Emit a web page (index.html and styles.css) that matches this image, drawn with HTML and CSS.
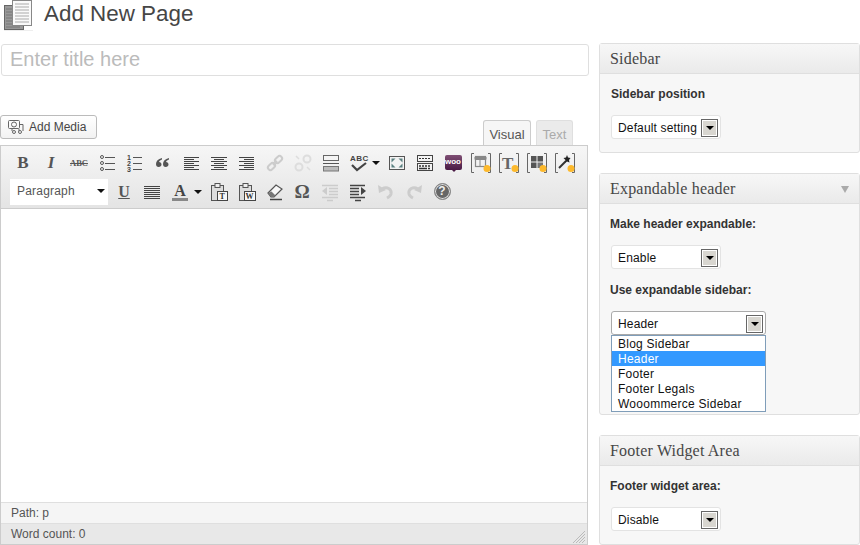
FILE: index.html
```html
<!DOCTYPE html>
<html lang="en">
<head>
<meta charset="utf-8">
<title>Add New Page</title>
<link rel="stylesheet" href="styles.css">
</head>
<body>
<div class="page">
  <main class="main-col">
    <header class="page-head">
      <svg class="page-icon" width="33" height="32" viewBox="0 0 33 32">
        <rect x="4.500" y="5.500" width="19" height="24" fill="#999" stroke="#666"/>
        <path d="M6 9h6M6 12h6M6 15h6M6 18h6M6 21h6M6 24h9M6 27h14" stroke="#777"/>
        <rect x="12.500" y="0.500" width="19" height="25" fill="#fafafa" stroke="#888"/>
        <path d="M15 4h14M15 7h14M15 10h14M15 13h14M15 16h14M15 19h14M15 22h14" stroke="#aaa"/>
        <rect x="4" y="30" width="29" height="1" fill="#eee"/>
      </svg>
      <h1 class="page-title">Add New Page</h1>
    </header>
    <div class="title-input">Enter title here</div>
    <div class="media-row">
      <button class="media-btn">
        <svg width="16" height="16" viewBox="0 0 16 16" fill="none" stroke="#666">
          <rect x="0.500" y="1.500" width="11" height="8" rx="1"/>
          <circle cx="6" cy="5.500" r="2.500"/>
          <path d="M12 5.500h3V12M4 10v2M11 10v2"/>
          <circle cx="6" cy="13" r="1.500"/><circle cx="12" cy="13" r="1.500"/>
        </svg>
        Add Media
      </button>
      <div class="tabs">
        <div class="tab active">Visual</div>
        <div class="tab">Text</div>
      </div>
    </div>
    <section class="editor">
      <div class="toolbar">
        <div class="tb-row">
          <span class="btn"><span class="g-b">B</span></span>
          <span class="btn"><span class="g-i">I</span></span>
          <span class="btn"><span class="g-s">ABC</span></span>
          <span class="btn"><svg width="20" height="20" viewBox="0 0 20 20" fill="none" stroke="#555"><circle cx="5" cy="4" r="1.500"/><circle cx="5" cy="10" r="1.500"/><circle cx="5" cy="16" r="1.500"/><path d="M8 4.500h10M8 10.500h10M8 16.500h10"/></svg></span>
          <span class="btn"><svg width="20" height="20" viewBox="0 0 20 20"><text x="2" y="7" class="num">1</text><text x="2" y="13" class="num">2</text><text x="2" y="19" class="num">3</text><path d="M8 4.500h9M8 10.500h9M8 16.500h9" stroke="#555"/></svg></span>
          <span class="btn"><svg width="20" height="20" viewBox="0 0 20 20" fill="#555"><path d="M9 5C5 6 3 8 3 11c0 2 1 3 2.700 3S8.500 13 8.500 11.500 7.500 9 6 9c.5-1.500 1.500-2 3-2.500zM16 5c-4 1-6 3-6 6 0 2 1 3 2.700 3s2.800-1 2.800-2.500S14.500 9 13 9c.5-1.500 1.500-2 3-2.500z"/></svg></span>
          <span class="btn"><svg width="20" height="20" viewBox="0 0 20 20" stroke="#444"><path d="M3 4.500h15M3 6.500h10M3 8.500h15M3 10.500h10M3 12.500h15M3 14.500h10M3 16.500h15"/></svg></span>
          <span class="btn"><svg width="20" height="20" viewBox="0 0 20 20" stroke="#444"><path d="M2 4.500h16M5 6.500h10M2 8.500h16M5 10.500h10M2 12.500h16M5 14.500h10M2 16.500h16"/></svg></span>
          <span class="btn"><svg width="20" height="20" viewBox="0 0 20 20" stroke="#444"><path d="M2 4.500h15M7 6.500h10M2 8.500h15M7 10.500h10M2 12.500h15M7 14.500h10M2 16.500h15"/></svg></span>
          <span class="btn"><svg width="20" height="20" viewBox="0 0 20 20" fill="none" stroke="#ccc" stroke-width="2"><rect x="2.500" y="11" width="8" height="5" rx="2.500" transform="rotate(-45 6.500 13.500)"/><rect x="9.500" y="4" width="8" height="5" rx="2.500" transform="rotate(-45 13.500 6.500)"/><path d="M8 12l4-4"/></svg></span>
          <span class="btn"><svg width="20" height="20" viewBox="0 0 20 20" fill="none" stroke="#ddd" stroke-width="2"><circle cx="14" cy="6" r="3.500"/><circle cx="6" cy="14" r="3.500"/><path d="M3 3l3 3M17 17l-3-3" stroke-width="1.500"/></svg></span>
          <span class="btn"><svg width="20" height="20" viewBox="0 0 20 20"><rect x="2.500" y="2.500" width="15" height="5" fill="#f4f4f4" stroke="#666"/><path d="M2 10.500h16" stroke="#555"/><rect x="2.500" y="13.500" width="15" height="4.500" fill="#bbb" stroke="#777"/></svg></span>
          <span class="btn btn-spell"><svg width="20" height="20" viewBox="0 0 20 20"><text x="1" y="8" class="abc">ABC</text><path d="M3 12l5 5 9-7" fill="none" stroke="#444" stroke-width="2.200"/></svg></span><span class="drop"></span>
          <span class="btn btn-after"><svg width="20" height="20" viewBox="0 0 20 20" fill="none"><rect x="2.500" y="3.500" width="15" height="13" stroke="#555" fill="#f3f3f3"/><path d="M4.500 5.500h4l-4 4zM15.500 5.500h-4l4 4zM4.500 14.500h4l-4-4zM15.500 14.500h-4l4-4z" fill="#5a8080"/></svg></span>
          <span class="btn"><svg width="20" height="20" viewBox="0 0 20 20"><rect x="2.500" y="2.500" width="15" height="6" fill="#f4f4f4" stroke="#444"/><path d="M4 5.500h2M7 5.500h2M10 5.500h2M13 5.500h2" stroke="#333"/><rect x="2.500" y="10.500" width="15" height="7" fill="#f4f4f4" stroke="#444"/><path d="M4 13h2M7 13h2M10 13h2M13 13h2M4 15.500h8M13 15.500h2" stroke="#333" stroke-width="1.500"/></svg></span>
          <span class="btn"><span class="woo">woo</span></span>
          <span class="btn"><svg width="22" height="22" viewBox="0 0 22 22" fill="none"><path d="M4 1.500H1.500v19H4M18 1.500h2.500v19H18" stroke="#666"/><rect x="5.500" y="4.500" width="10" height="10" stroke="#888" stroke-width="1.200"/><path d="M5 5h11v2.500H5zM10 7v8" stroke="#888" fill="#888"/><circle cx="17" cy="16.500" r="3.500" fill="#fdb92c"/></svg></span>
          <span class="btn"><svg width="22" height="22" viewBox="0 0 22 22" fill="none"><path d="M4 1.500H1.500v19H4M18 1.500h2.500v19H18" stroke="#666"/><text x="4" y="17" class="big-t">T</text><circle cx="17" cy="16.500" r="3.500" fill="#fdb92c"/></svg></span>
          <span class="btn"><svg width="22" height="22" viewBox="0 0 22 22" fill="none"><path d="M4 1.500H1.500v19H4M18 1.500h2.500v19H18" stroke="#666"/><path d="M5 4h5.500v5.500H5zM11.500 4H17v5.500h-5.500zM5 10.500h5.500V16H5z" fill="#555"/><path d="M11.500 10.500H17V16h-5.500z" fill="#777"/><circle cx="17" cy="16.500" r="3.500" fill="#fdb92c"/></svg></span>
          <span class="btn"><svg width="22" height="22" viewBox="0 0 22 22" fill="none"><path d="M4 1.500H1.500v19H4M18 1.500h2.500v19H18" stroke="#666"/><path d="M5 16l7-7" stroke="#333" stroke-width="2"/><path d="M13 3l1 2.500 2.500 0.500-1.500 2 .5 2.500-2.500-1-2 1 .5-2.500-2-2 2.500-.5z" fill="#222"/><circle cx="17" cy="16.500" r="3.500" fill="#fdb92c"/></svg></span>
        </div>
        <div class="tb-row tb-row2">
          <div class="format-select"><span>Paragraph</span><span class="drop drop-fmt"></span></div>
          <span class="btn"><span class="g-u">U</span></span>
          <span class="btn"><svg width="20" height="20" viewBox="0 0 20 20" stroke="#444"><path d="M2 4.500h16M2 6.500h16M2 8.500h16M2 10.500h16M2 12.500h16M2 14.500h16M2 16.500h16"/></svg></span>
          <span class="btn btn-color"><span class="g-a">A</span></span><span class="drop drop-color"></span>
          <span class="btn btn-paste"><svg width="20" height="20" viewBox="0 0 20 20"><rect x="2.500" y="3.500" width="12" height="15" fill="#ddd" stroke="#555"/><rect x="6" y="1.500" width="5" height="4" fill="#eee" stroke="#555"/><rect x="8.500" y="9.500" width="10" height="9" fill="#f7f7f7" stroke="#444"/><text x="10.500" y="17" class="pt">T</text></svg></span>
          <span class="btn"><svg width="20" height="20" viewBox="0 0 20 20"><rect x="2.500" y="3.500" width="12" height="15" fill="#ddd" stroke="#555"/><rect x="6" y="1.500" width="5" height="4" fill="#eee" stroke="#555"/><rect x="7.500" y="9.500" width="11" height="9" fill="#f7f7f7" stroke="#444"/><text x="8.500" y="17" class="pt">W</text></svg></span>
          <span class="btn"><svg width="20" height="20" viewBox="0 0 20 20"><path d="M3 11l8-8 6 4-8 8H6z" fill="#f8f8f8" stroke="#555" stroke-width="1.200"/><path d="M3 11l3 4h3l1.500-1.500-4-4z" fill="#777"/><path d="M5 17.500h12" stroke="#444" stroke-width="1.500"/></svg></span>
          <span class="btn btn-omega"><span class="g-o">Ω</span></span>
          <span class="btn"><svg width="20" height="20" viewBox="0 0 20 20" stroke="#ccc"><path d="M2 3.500h16M9 6.500h9M9 9.500h9M9 12.500h9M2 15.500h16M7 18.500h6" stroke-width="1.500"/><path d="M7 5v8l-5-4z" fill="#ccc" stroke="none"/></svg></span>
          <span class="btn"><svg width="20" height="20" viewBox="0 0 20 20" stroke="#444"><path d="M2 3.500h15M2 6.500h9M2 9.500h9M2 12.500h9M2 15.500h15M7 18.500h6" stroke-width="1.500"/><path d="M13 5v8l5-4z" fill="#444" stroke="none"/></svg></span>
          <span class="btn"><svg width="20" height="20" viewBox="0 0 20 20" fill="none" stroke="#ccc" stroke-width="3"><path d="M6 7c5-3 10 0 9 5-.5 2-2 3-4 4"/><path d="M2 3l1 8 7-3z" fill="#ccc" stroke="none"/></svg></span>
          <span class="btn"><svg width="20" height="20" viewBox="0 0 20 20" fill="none" stroke="#ccc" stroke-width="3"><path d="M14 7C9 4 4 7 5 12c.5 2 2 3 4 4"/><path d="M18 3l-1 8-7-3z" fill="#ccc" stroke="none"/></svg></span>
          <span class="btn"><span class="help">?</span></span>
        </div>
      </div>
      <div class="content"></div>
      <div class="path">Path: p</div>
      <div class="wordcount">
        <span>Word count: 0</span>
        <svg class="resize" width="14" height="14" viewBox="0 0 14 14" stroke="#bbb"><path d="M13 1L1 13M13 4L4 13M13 7L7 13M13 10L10 13"/></svg>
      </div>
    </section>
  </main>
  <aside class="side-col">
    <section class="box">
      <h2 class="box-title">Sidebar</h2>
      <div class="box-body">
        <p class="label label-first">Sidebar position</p>
        <div class="select"><span>Default setting</span><span class="arrow"></span></div>
      </div>
    </section>
    <section class="box box-tall">
      <h2 class="box-title">Expandable header<span class="collapse"></span></h2>
      <div class="box-body">
        <p class="label">Make header expandable:</p>
        <div class="select"><span>Enable</span><span class="arrow"></span></div>
        <p class="label label-second">Use expandable sidebar:</p>
        <div class="select select-open"><span>Header</span><span class="arrow"></span></div>
        <ul class="options">
          <li>Blog Sidebar</li>
          <li class="sel">Header</li>
          <li>Footer</li>
          <li>Footer Legals</li>
          <li>Wooommerce Sidebar</li>
        </ul>
      </div>
    </section>
    <section class="box">
      <h2 class="box-title">Footer Widget Area</h2>
      <div class="box-body">
        <p class="label">Footer widget area:</p>
        <div class="select"><span>Disable</span><span class="arrow"></span></div>
      </div>
    </section>
  </aside>
</div>
</body>
</html>
```
FILE: styles.css
```css
* { box-sizing: border-box; }
html, body { margin: 0; height: 545px; overflow: hidden; background: #fff; }
body { font: 12px "Liberation Sans", Arial, sans-serif; color: #333; }
.page { display: flex; gap: 10px; }
.main-col { width: 589px; flex: none; }
.side-col { width: 261px; flex: none; padding-top: 43px; display: flex; flex-direction: column; gap: 20px; }

.page-head { display: flex; align-items: flex-start; height: 44px; }
.page-icon { flex: none; }
.page-title { margin: 0 0 0 11px; font: 400 22.4px/27px "Liberation Sans", sans-serif; color: #464646; }

.title-input { margin-left: 1px; height: 32px; border: 1px solid #dfdfdf; border-radius: 3px; padding-left: 8px; font-size: 20px; line-height: 29px; color: #bbb; background: #fff; }

.media-row { display: flex; justify-content: space-between; align-items: flex-end; height: 69px; }
.media-btn { margin: 0 0 6px; width: 97px; height: 24px; display: flex; align-items: center; gap: 5px; padding: 0 0 0 7px; border: 1px solid #bbb; border-radius: 3px; background: linear-gradient(#fff, #f2f2f2); font: 12px "Liberation Sans", sans-serif; color: #464646; }
.tabs { display: flex; gap: 5px; margin-right: 16px; position: relative; top: 1px; }
.tab { width: 37px; height: 25px; text-align: center; border: 1px solid #dfdfdf; border-bottom: 0; border-radius: 3px 3px 0 0; background: #ebebeb; color: #aaa; font-size: 13px; line-height: 27px; }
.tab.active { width: 48px; background: #f6f6f6; color: #555; border-color: #ccc; height: 26px; }

.editor { position: relative; height: 400px; width: 588px; border: 1px solid #ccc; border-top-color: #ccc; display: flex; flex-direction: column; }
.toolbar { height: 63px; padding: 2px 0 0 8px; background: linear-gradient(#f6f6f6, #e4e4e4); border-bottom: 1px solid #ccc; }
.tb-row { display: flex; align-items: center; height: 29px; }
.tb-row2 { padding-left: 1px; }
.btn { width: 28px; height: 26px; flex: none; display: flex; align-items: center; justify-content: center; }
.btn-spell { margin-right: -1px; }
.btn-after { margin-left: 3px; }
.drop { width: 0; height: 0; flex: none; border: 4px solid transparent; border-top: 4px solid #111; border-bottom: 0; }
.format-select { width: 98px; height: 26px; margin-right: 2px; display: flex; align-items: center; justify-content: space-between; padding: 0 3px 1px 7px; background: #fff; color: #555; font-size: 12px; letter-spacing: .2px; flex: none; }
.btn-paste { margin-left: 3px; }
.btn-omega { margin-left: -1px; }

.g-b, .g-i, .g-u, .g-a, .g-o { font-family: "Liberation Serif", serif; font-weight: 700; color: #555; }
.g-b { font-size: 17px; }
.g-i { font-size: 17px; font-style: italic; }
.g-s { font: 700 8.500px "Liberation Serif", serif; color: #555; text-decoration: line-through; }
.g-u { font-size: 16px; text-decoration: underline; }
.g-a { font-size: 16px; line-height: 15px; color: #444; border-bottom: 3px solid #888; padding: 0 2px; width: 16px; text-align: center; }
.g-o { font-size: 19px; }
.num { font: 700 7px "Liberation Sans", sans-serif; fill: #444; }
.abc { font: 700 8px "Liberation Sans", sans-serif; fill: #444; letter-spacing: .5px; }
.big-t { font: 700 17px "Liberation Serif", serif; fill: #666; }
.pt { font: 700 8px "Liberation Serif", serif; fill: #333; }
.woo { position: relative; width: 17px; height: 15px; display: block; background: linear-gradient(#7f4f74, #4a1a45); border-radius: 2px; color: #fff; font-size: 8px; line-height: 14px; text-align: center; font-weight: 700; }
.woo::after { content: ""; position: absolute; left: 7px; top: 15px; border: 2px solid transparent; border-top-color: #4a1a45; border-bottom: 0; }
.help { width: 17px; height: 17px; border-radius: 50%; background: #666; border: 1px solid #888; box-shadow: inset 0 0 0 1px #ddd; color: #eee; font-weight: 700; font-size: 12px; line-height: 15px; text-align: center; }

.content { flex: 1; background: #fff; }
.path { height: 21px; padding-left: 10px; background: #f5f5f5; border-top: 1px solid #dfdfdf; color: #555; line-height: 20px; }
.wordcount { position: relative; height: 21px; padding-left: 10px; background: #e8e8e8; border-top: 1px solid #dfdfdf; color: #555; line-height: 20px; }
.resize { position: absolute; right: 1px; bottom: 0; }

.box { height: 110px; border: 1px solid #dfdfdf; border-radius: 3px; background: #f7f7f7; }
.box-tall { height: 242px; }
.box-title { position: relative; margin: 0; height: 30px; padding-left: 10px; background: linear-gradient(#f7f7f7, #eaeaea); border-bottom: 1px solid #dfdfdf; font: 400 16px/29px "Liberation Serif", serif; letter-spacing: .2px; color: #464646; }
.collapse { position: absolute; right: 10px; top: 12px; width: 0; height: 0; border: 4px solid transparent; border-top: 7px solid #aaa; border-bottom: 0; }
.box-body { padding: 0 0 0 11px; }
.label { margin: 0 0 0 -1px; padding-top: 12px; height: 41px; font-weight: 700; line-height: 16px; color: #333; }
.label-first { margin-left: 0; }
.label-second { height: 42px; padding-top: 13px; }
.select { width: 110px; height: 24px; display: flex; align-items: center; justify-content: space-between; padding: 1px 2px 0 6px; background: #fff; border: 1px solid #e3e3e3; border-radius: 3px; color: #111; font-size: 12px; letter-spacing: .15px; }
.arrow { width: 17px; height: 18px; display: flex; align-items: center; justify-content: center; background: #d8d6d0; border: 1px solid #666; box-shadow: inset 0 0 0 1px #fff; flex: none; }
.arrow::after { content: ""; border: 4px solid transparent; border-top: 4px solid #000; border-bottom: 0; }
.select-open { width: 155px; border-color: #aaa; }
.options { list-style: none; margin: 0; padding: 0; width: 155px; height: 77px; background: #fff; border: 1px solid #7f9db9; color: #111; letter-spacing: .25px; }
.options li { height: 15px; line-height: 16px; padding-left: 6px; }
.options .sel { background: #39f; color: #fff; }
```
